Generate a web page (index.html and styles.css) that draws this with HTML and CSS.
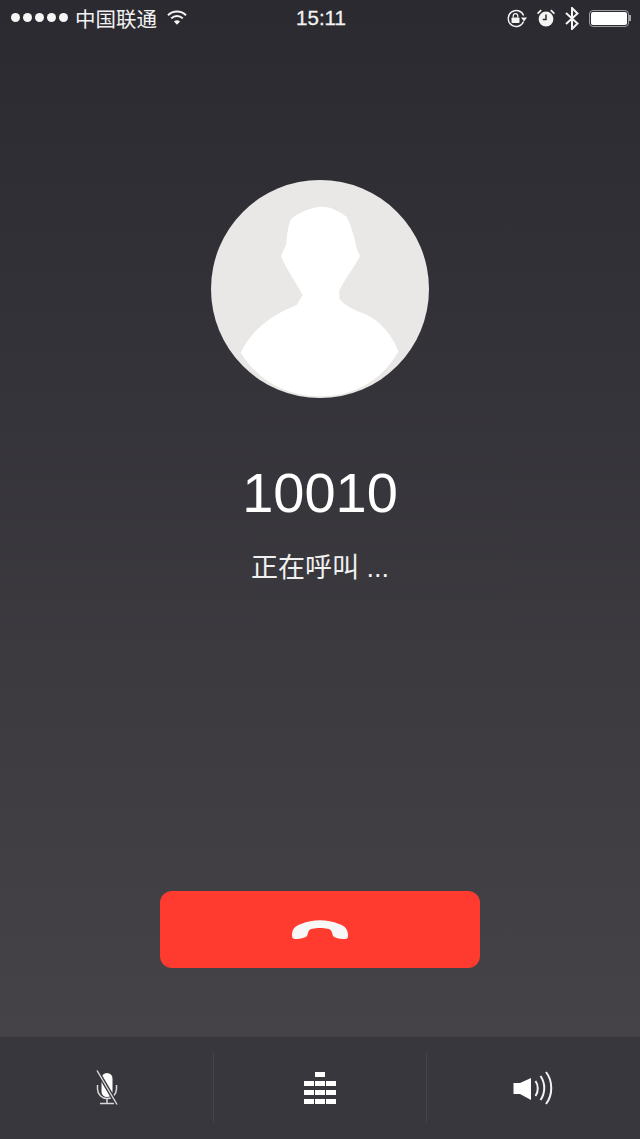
FILE: index.html
```html
<!DOCTYPE html>
<html lang="zh-CN">
<head>
  <meta charset="UTF-8" />
  <meta name="viewport" content="width=device-width, initial-scale=1.0"/>
  <title>正在呼叫</title>
  <link rel="stylesheet" href="styles.css">
</head>
<body>
  <div class="screen">
    <div class="status">
      <div class="status-left">
        <div class="signal">
          <span class="dot"></span><span class="dot"></span><span class="dot"></span><span class="dot"></span><span class="dot"></span>
        </div>
        <span class="carrier">中国联通</span>
        <svg class="wifi" width="20" height="17" viewBox="0 0 20 17">
          <path d="M1 6.2C6 1.2 14 1.2 19 6.2" fill="none" stroke="#f4f4f4" stroke-width="2"/>
          <path d="M4.2 9.4C7.4 6.3 12.6 6.3 15.8 9.4" fill="none" stroke="#f4f4f4" stroke-width="2"/>
          <path d="M7 12.4C8.8 10.9 11.2 10.9 13 12.4L10 15.8Z" fill="#f4f4f4"/>
        </svg>
      </div>
      <div class="time">15:11</div>
      <div class="status-right">
        <svg width="21" height="19" viewBox="0 0 21 19">
          <path d="M17.6 12.5A8 8 0 1 1 17.6 6.5" fill="none" stroke="#f4f4f4" stroke-width="1.4"/>
          <path d="M15 8.5H21L18 12.5Z" fill="#f4f4f4"/>
          <rect x="5.5" y="8.5" width="8" height="5.5" rx="0.8" fill="#f4f4f4"/>
          <path d="M7.2 8.5V7A2.3 2.3 0 0 1 11.8 7V8.5" fill="none" stroke="#f4f4f4" stroke-width="1.2"/>
        </svg>
        <svg width="18" height="18" viewBox="0 0 18 18">
          <circle cx="9" cy="10" r="7.4" fill="#f4f4f4"/>
          <path d="M9 5.5V10.5H5.8" fill="none" stroke="#2c2b31" stroke-width="1.5"/>
          <path d="M0.6 4.6L4.2 1.2M17.4 4.6L13.8 1.2" stroke="#f4f4f4" stroke-width="1.8"/>
        </svg>
        <svg class="bluetooth" width="14" height="23" viewBox="0 0 14 23">
          <path d="M1 6L12.5 16.5L7 22V1L12.5 6.5L1 17" fill="none" stroke="#f4f4f4" stroke-width="2"/>
        </svg>
        <div class="battery">
          <div class="battery-body"><div class="battery-fill"></div></div>
          <div class="battery-nub"></div>
        </div>
      </div>
    </div>

    <div class="call">
      <svg class="avatar" width="218" height="218" viewBox="33 30 654 654">
        <circle cx="360" cy="357" r="327" fill="#e9e8e6"/>
        <path d="M365 110C392 110 420 125 440 140C455 170 465 210 470 235L480 258C470 280 440 320 418 360L418 385C430 405 460 420 490 430C540 450 580 500 595 545C540 640 450 679 360 679C270 679 180 640 122 548C150 490 200 440 290 405L308 375C290 340 260 300 243 258L258 225C262 190 265 160 275 145C300 125 340 110 365 110Z" fill="#fff"/>
      </svg>
      <div class="number">10010</div>
      <div class="state">正在呼叫 ...</div>
      <button class="hangup" type="button">
        <svg width="58" height="22" viewBox="0 0 58 22">
          <path d="M1 16C1 10 4 7 10 5C22 0 36 0 48 5C54 7 57 10 57 17C57 20 55 20 52 20C48 20 44 19 42 17C41 14 41 12 39 10.5C34 8.5 24 8.5 19 10.5C17 12 17 15 16 17C14 19 9 20 5 20C2 20 1 19 1 16Z" fill="#f7f7f7"/>
        </svg>
      </button>
    </div>

    <div class="controls">
      <div class="control">
        <svg width="24" height="36" viewBox="0 0 24 36">
          <rect x="6.5" y="3" width="11" height="24" rx="5.5" fill="#fff"/>
          <path d="M2.5 15V19A9.5 9.5 0 0 0 21.5 19V15" fill="none" stroke="#d8d8da" stroke-width="1.5"/>
          <path d="M12 28.5V33M5 33.5H19" fill="none" stroke="#d8d8da" stroke-width="1.5"/>
          <path d="M2 0.5L22 34.5" stroke="#38373d" stroke-width="4"/>
          <path d="M2 0.5L22 34.5" stroke="#dcdcde" stroke-width="1.4"/>
        </svg>
      </div>
      <div class="control">
        <div class="keypad">
          <span class="key key-top"></span>
          <span class="key"></span><span class="key"></span><span class="key"></span>
          <span class="key"></span><span class="key"></span><span class="key"></span>
          <span class="key"></span><span class="key"></span><span class="key"></span>
        </div>
      </div>
      <div class="control">
        <svg width="41" height="34" viewBox="0 0 41 34">
          <path d="M0.5 12H7L18 7V29L7 23H0.5Z" fill="#fff"/>
          <path d="M22.5 10C25.5 14 25.5 21 22.5 25" fill="none" stroke="#f4f4f4" stroke-width="2"/>
          <path d="M27.5 5C32.5 12 32.5 22 27.5 29" fill="none" stroke="#f4f4f4" stroke-width="2"/>
          <path d="M33 1C40 10 40 24 33 33" fill="none" stroke="#f4f4f4" stroke-width="2"/>
        </svg>
      </div>
    </div>
  </div>
</body>
</html>
```

FILE: styles.css
```css
html, body {
  margin: 0;
  padding: 0;
}
body {
  font-family: "Liberation Sans", "Noto Sans CJK SC", sans-serif;
  background: #2c2b31;
  color: #fff;
}
.screen {
  width: 640px;
  height: 1139px;
  display: flex;
  flex-direction: column;
  background: linear-gradient(#2b2a30, #454348 1037px);
  overflow: hidden;
}

/* status bar */
.status {
  height: 36px;
  display: grid;
  grid-template-columns: 1fr auto 1fr;
  align-items: center;
  color: #f2f2f2;
  flex-shrink: 0;
}
.status-left {
  display: flex;
  align-items: center;
  padding-left: 11px;
}
.signal {
  display: flex;
  gap: 3px;
  margin-bottom: 2px;
}
.dot {
  width: 9px;
  height: 9px;
  border-radius: 50%;
  background: #f6f6f6;
}
.carrier {
  font-family: "Noto Sans CJK SC", sans-serif;
  font-size: 20.5px;
  line-height: 36px;
  margin-left: 7px;
}
.wifi {
  margin-left: 10px;
  margin-bottom: 2px;
}
.time {
  font-size: 20.5px;
  padding-left: 2px;
  -webkit-text-stroke: 0.3px #f2f2f2;
}
.status-right {
  display: flex;
  align-items: center;
  justify-content: flex-end;
  padding-right: 9px;
  gap: 10px;
}
.battery {
  display: flex;
  align-items: center;
}
.battery-body {
  width: 40px;
  height: 17px;
  box-sizing: border-box;
  padding: 1px;
  border: 1px solid #9c9b9f;
  border-radius: 4px;
}
.battery-fill {
  height: 100%;
  background: #fff;
  border-radius: 2px;
}
.battery-nub {
  width: 2px;
  height: 6px;
  background: #a5a4a8;
}

/* call area */
.call {
  flex: 1;
  display: flex;
  flex-direction: column;
  align-items: center;
  padding-top: 144px;
}
.avatar {
  display: block;
}
.number {
  font-size: 56px;
  line-height: 66px;
  margin-top: 62px;
}
.state {
  font-size: 27px;
  line-height: 40px;
  margin-top: 22px;
  color: #f0f0f0;
}
.hangup {
  width: 320px;
  height: 77px;
  margin-top: auto;
  margin-bottom: 69px;
  padding: 0;
  border: none;
  border-radius: 12px;
  background: #ff3b30;
  display: flex;
  align-items: center;
  justify-content: center;
}

/* bottom controls */
.controls {
  height: 102px;
  flex-shrink: 0;
  display: grid;
  grid-template-columns: 214px 213px 213px;
  background: #38373d;
  box-sizing: border-box;
  padding: 16px 0 17px;
}
.control {
  display: flex;
  align-items: center;
  justify-content: center;
  border-right: 1px solid #46454a;
}
.control:last-child {
  border-right: none;
}
.keypad {
  display: grid;
  grid-template-columns: repeat(3, 10px);
  gap: 4px 1px;
  justify-content: center;
}
.key {
  height: 5px;
  background: #fff;
}
.key-top {
  grid-column: 1 / -1;
  justify-self: center;
  width: 10px;
}
```
